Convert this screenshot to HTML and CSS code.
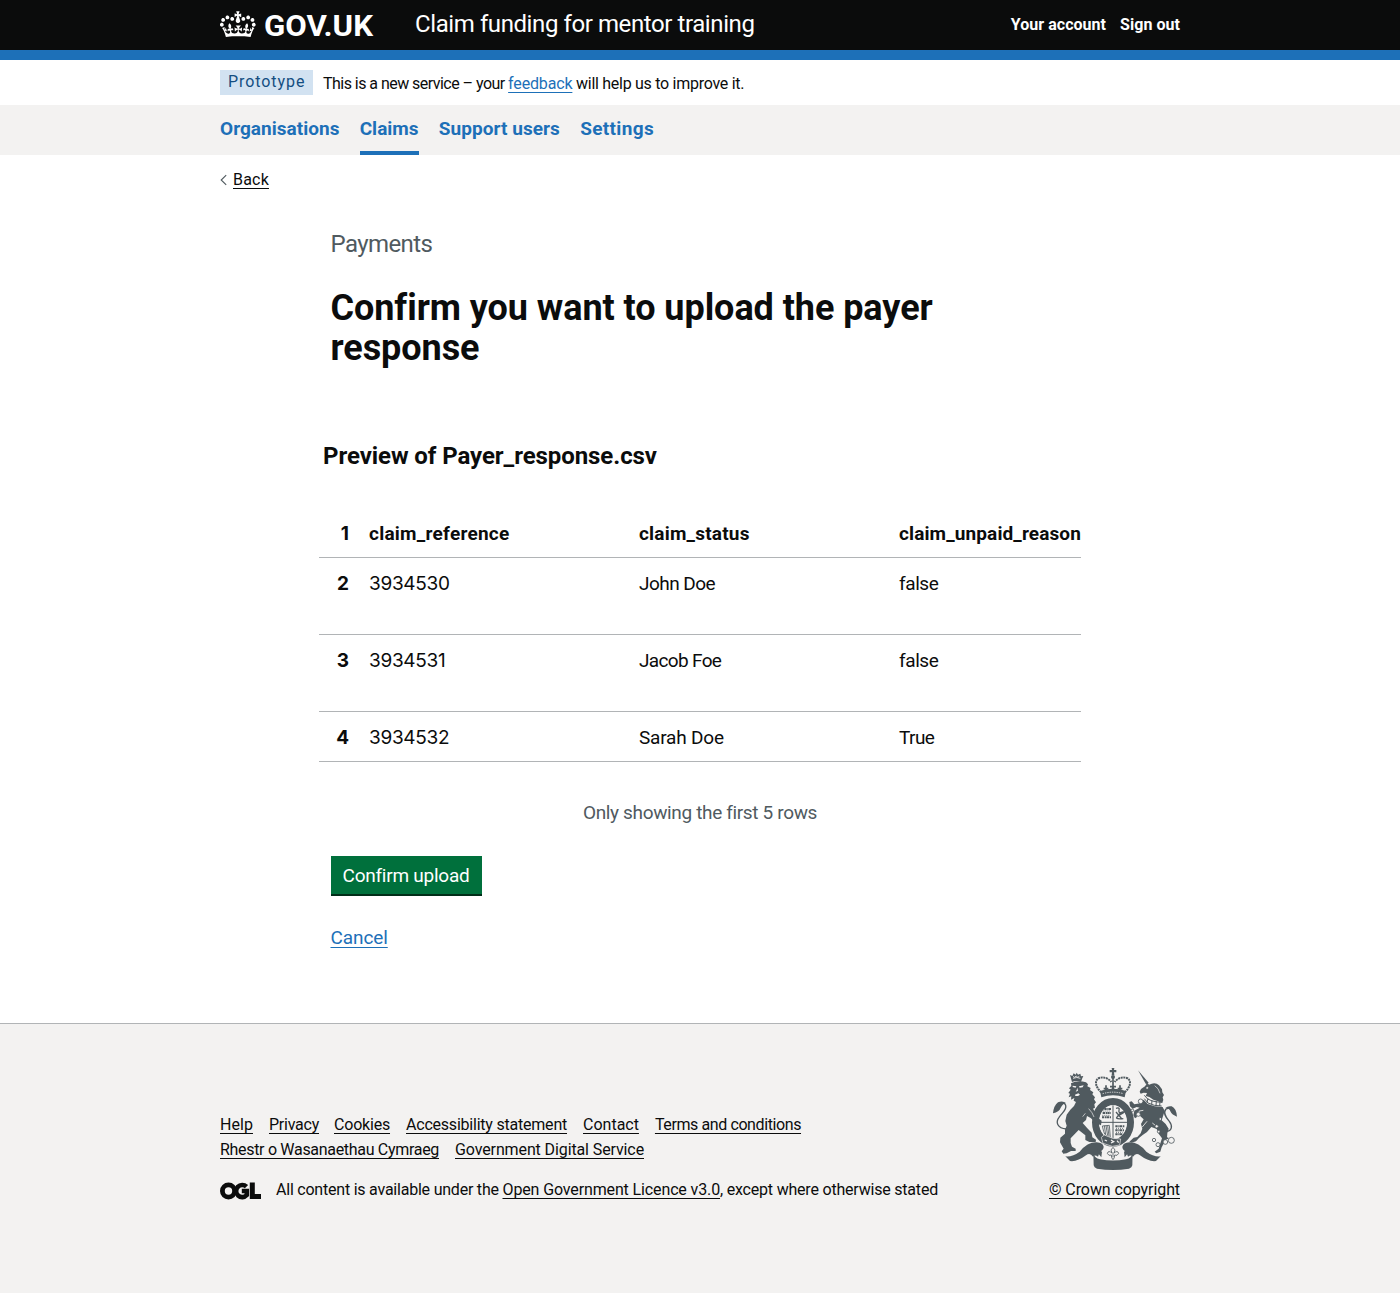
FILE: index.html
```
<!DOCTYPE html>
<html lang="en">
<head>
<meta charset="utf-8">
<title>Confirm you want to upload the payer response - Claim funding for mentor training</title>
<link rel="stylesheet" href="styles.css">
</head>
<body>
<header class="header">
  <div class="container header-inner">
    <svg class="crown" viewBox="0 4 36 27" width="36" height="27" fill="currentColor" aria-hidden="true"><path d="M6.7 12.2c1 .4 2.1-.1 2.5-1s-.1-2.1-1-2.5c-1-.4-2.1.1-2.5 1-.4 1-.1 2.1 1 2.5m-4.3 2.5c1 .4 2.1-.1 2.5-1s-.1-2.1-1-2.5c-1-.4-2.1.1-2.5 1-.5 1 0 2.1 1 2.5m-1.3 4.8c1 .4 2.1-.1 2.5-1 .4-1-.1-2.1-1-2.5-1-.4-2.1.1-2.5 1-.4 1 0 2.1 1 2.5m10.4-5.8c1 .4 2.1-.1 2.5-1s-.1-2.1-1-2.5c-1-.4-2.1.1-2.5 1s0 2.1 1 2.5m17.4-1.5c-1 .4-2.1-.1-2.5-1s.1-2.1 1-2.5c1-.4 2.1.1 2.5 1 .5 1 0 2.1-1 2.5m4.3 2.5c-1 .4-2.1-.1-2.5-1s.1-2.1 1-2.5c1-.4 2.1.1 2.5 1 .5 1 0 2.1-1 2.5m1.3 4.8c-1 .4-2.1-.1-2.5-1-.4-1 .1-2.1 1-2.5 1-.4 2.1.1 2.5 1s0 2.1-1 2.5m-10.4-5.8c-1 .4-2.1-.1-2.5-1s.1-2.1 1-2.5c1-.4 2.1.1 2.5 1s0 2.1-1 2.5m-5.3-4.8 2.4 1.3V6.5l-2.4.8c-.1-.1-.1-.1-.2-.1s1-3 1-3h-3.4l1 3c-.1.1-.2.1-.2.1-.1.1-2.4-.7-2.4-.7v3.5L17 8.8c.1.1.1.2.2.2l-1.4 4.2c-.1.2-.1.4-.1.6 0 1.1.8 2.1 1.9 2.2h.7c1.1-.2 1.9-1.1 1.9-2.1 0-.2 0-.4-.1-.6l-1.4-4.3c-.1 0 0-.1.1-.2m-1 20.3c4.6 0 8.9.3 12.8.9 1.1-4.6 2.4-7.2 3.8-9.1l-2.6-.9c.3 1.3.3 1.9 0 2.8-.4-.4-.8-1.2-1.1-2.4l-1.2 4.2c.8-.5 1.3-.9 2-.9-1.2 2.6-2.6 3.1-3.6 3-1.2-.2-1.7-1.3-1.5-2.2.3-1.3 1.6-1.6 2.2-.1 1.2-2.4-.8-3.1-2.1-2.4 1.9-1.9 2.2-3.6.6-5.7-2.2 1.7-2.2 3.3-1.2 5.6-1.3-1.5-3.3-.7-2.5 1.7.9-1.4 2.1-.5 2 .8-.2 1.2-1.7 2.1-3.7 2-2.8-.2-3-2.2-3-3.7.7-.1 1.9.5 3 2l.4-4.4c-1.1 1.2-2.2 1.4-3.3 1.4.4-1.2 2.2-3.1 2.2-3.1h-5.4s1.7 1.9 2.2 3.1c-1.1 0-2.2-.3-3.3-1.4l.4 4.4c1.1-1.5 2.2-2.1 3-2-.1 1.6-.2 3.5-3 3.7-1.9.2-3.5-.8-3.7-2-.2-1.3 1-2.2 1.9-.8.7-2.4-1.3-3.1-2.5-1.7 1-2.3.9-4-1.2-5.6-1.6 2.1-1.4 3.8.6 5.7-1.3-.8-3.3 0-2.1 2.4.6-1.4 1.9-1.1 2.2.1.2.9-.3 1.9-1.5 2.2-.9.2-2.4-.5-3.6-3 .7 0 1.3.3 2 .9l-1.2-4.2c-.3 1.2-.7 1.9-1.1 2.4-.3-.8-.2-1.4 0-2.8l-2.6.9c1.4 1.9 2.7 4.5 3.8 9.1 3.9-.6 8.2-.9 12.7-.9z"/></svg>
    <svg class="wordmark" width="112" height="38" fill="currentColor"><text x="0" y="28" textLength="109" lengthAdjust="spacingAndGlyphs">GOV.UK</text></svg>
    <span class="service-name">Claim funding for mentor training</span>
    <nav class="account"><a class="account-link">Your account</a><a class="signout-link">Sign out</a></nav>
  </div>
</header>
<div class="container phase">
  <strong class="tag">Prototype</strong>
  <p class="phase-text"><span class="phase-start">This is a new service – your </span><a class="link feedback">feedback</a><span class="phase-end"> will help us to improve it.</span></p>
</div>
<div class="nav-bar">
  <nav class="container nav">
    <a class="nav-item nav-orgs">Organisations</a>
    <a class="nav-item nav-current">Claims</a>
    <a class="nav-item nav-users">Support users</a>
    <a class="nav-item nav-settings">Settings</a>
  </nav>
</div>
<div class="container back">
  <svg width="8" height="12" viewBox="0 0 8 12" fill="none" stroke="#505a5f" stroke-width="1.1"><path d="M6.2 1.2 1.2 6l5 4.8"/></svg>
  <a class="plain-link back-link">Back</a>
</div>
<main class="container main">
  <div class="intro">
    <span class="caption">Payments</span>
    <h1>Confirm you want to upload the payer response</h1>
  </div>
  <h2>Preview of Payer_response.csv</h2>
  <table>
    <thead>
      <tr><th class="num">1</th><th class="col-ref">claim_reference</th><th class="col-status">claim_status</th><th class="col-reason">claim_unpaid_reason</th></tr>
    </thead>
    <tbody>
      <tr class="tall"><th class="num">2</th><td class="ref">3934530</td><td class="john">John Doe</td><td class="bool">false</td></tr>
      <tr class="tall"><th class="num">3</th><td class="ref">3934531</td><td class="jacob">Jacob Foe</td><td class="bool">false</td></tr>
      <tr><th class="num">4</th><td class="ref">3934532</td><td class="sarah">Sarah Doe</td><td class="bool-true">True</td></tr>
    </tbody>
  </table>
  <p class="note">Only showing the first 5 rows</p>
  <div class="actions">
    <button class="button">Confirm upload</button>
    <a class="link cancel">Cancel</a>
  </div>
</main>
<footer class="footer">
  <div class="container footer-inner">
    <div class="footer-meta">
      <div class="footer-links">
        <a class="plain-link f-help">Help</a><a class="plain-link f-privacy">Privacy</a><a class="plain-link f-cookies">Cookies</a><a class="plain-link f-access">Accessibility statement</a><a class="plain-link f-contact">Contact</a><a class="plain-link f-terms">Terms and conditions</a>
      </div>
      <div class="footer-links">
        <a class="plain-link f-cymraeg">Rhestr o Wasanaethau Cymraeg</a><a class="plain-link f-gds">Government Digital Service</a>
      </div>
      <div class="licence">
        <svg class="ogl" width="42" height="18" viewBox="0 0 42 18" fill="none" stroke="#0b0c0c" aria-label="OGL"><circle cx="8.5" cy="9" r="6.1" stroke-width="4.8"/><path d="M26.5 4.7a6.1 6.1 0 1 0 .3 8.4V9h-5" stroke-width="4.6"/><path d="M32.3.5v14h8.7" stroke-width="5"/></svg>
        <p><span class="lic-start">All content is available under the </span><a class="plain-link lic-link">Open Government Licence v3.0</a><span class="lic-end">, except where otherwise stated</span></p>
      </div>
    </div>
    <div class="copyright">
      <svg class="crest" viewBox="39 24 372 306" width="124" height="102" fill="#505a5f" stroke="none" aria-hidden="true">
        <!-- royal crown -->
        <path d="M215 24h8l-1 6h7v7h-7l1 8h-8l1-8h-7v-7h7z"/>
        <circle cx="219" cy="51" r="6"/>
        <g fill="none" stroke="#505a5f">
          <path d="M184 97C166 82 162 60 178 54C192 49 206 56 214 66M254 97C272 82 276 60 260 54C246 49 232 56 224 66" stroke-width="6" stroke-dasharray="6 2"/>
          <path d="M219 54v32M198 76v16M240 76v16M191 86h14M233 86h14M210 80h18" stroke-width="5"/>
        </g>
        <path d="M180 93Q219 80 258 93L254 112Q219 100 184 112ZM210 94l9-15 9 15z"/>
        <path d="M188 101q31-9 62 0" fill="none" stroke="#f3f2f1" stroke-width="2.5" stroke-dasharray="4 3"/>
        <!-- garter and shield -->
        <ellipse cx="219" cy="187" rx="52" ry="62" fill="none" stroke="#505a5f" stroke-width="22"/>
        <ellipse cx="219" cy="187" rx="42" ry="51" fill="#f3f2f1"/>
        <g fill="none" stroke="#505a5f">
          <path d="M219 136v104M176 187h86" stroke-width="3"/>
          <path d="M193 147h20M188 159h25M186 172h27M226 199h27M226 211h26M226 223h21" stroke-width="6" stroke-dasharray="7 2 4 1"/>
          <path d="M190 153h20M187 166h24M228 205h24M228 217h20" stroke-width="2.5" stroke-dasharray="3 3"/>
          <path d="M228 145q12-4 9 6t11 5-9 9 11 11M230 174q8-16 17-17M228 156l17 20" stroke-width="4"/>
          <path d="M187 198q4 20 8 26l16 9-3-37zM193 197l4 27M198 197l5 30M203 197l4 32" stroke-width="2.5"/>
        </g>
        <!-- lion -->
        <path d="M96 66L92 52L90 45L97 48L101 40L107 44L110 38L114 44L121 41L123 49L130 48L126 57L123 66Q110 60 96 66Z"/>
        <path d="M99 55q12-5 22 0M99 49l4 3 6-4 4 4 5-3" fill="none" stroke="#f3f2f1" stroke-width="2.5"/>
        <path d="M93 70Q113 60 138 67L144 73L142 79L152 84L150 90L160 97L157 103L165 112L162 118L168 127L163 133L165 143L159 146L171 164L174 174L185 182L183 196L174 192L172 203L165 196L166 187L152 174L141 168L138 180L128 189L142 205L155 218L157 232L168 239L167 246L148 246L136 240L136 226L116 210L105 221L92 235L92 249L96 260L107 266L107 273L93 273L80 280L70 281L65 274L71 266L60 247L61 233L75 221L75 209L80 197L76 183L80 164L91 149L102 138L108 126L101 122L103 114L93 119L94 109L86 112L90 101L85 99L92 89L87 85L94 78Z"/>
        <path d="M98 77L109 79L107 83L98 81ZM117 79L131 76L128 82L119 83ZM112 83L114 92L107 95L110 90ZM105 104L115 100L120 104L114 108L106 108Z" fill="#f3f2f1"/>
        <path d="M146 146q12 12 16 25M128 170l8-10" fill="none" stroke="#f3f2f1" stroke-width="2"/>
        <path d="M79 207C52 205 46 187 57 172C68 156 81 150 77 136C72 122 58 130 52 146" fill="none" stroke="#505a5f" stroke-width="4"/>
        <path d="M39 160Q41 137 54 127Q68 121 78 129Q68 131 63 142Q57 157 39 160Z"/>
        <!-- unicorn -->
        <path d="M294 31L326 68L318 73Z"/>
        <path d="M315 79L322 68L327 74Q346 64 357 76L366 88L367 97L372 105L368 112L370 120L366 129L354 124L340 119L328 111L317 108L321 99L311 98L302 101L299 95L303 87Z"/>
        <path d="M318 84l6-3-1 5z" fill="#f3f2f1" stroke="#f3f2f1"/>
        <path d="M344 77q12 7 16 23" fill="none" stroke="#f3f2f1" stroke-width="2"/>
        <path d="M313 106L323 117L337 123L353 126L368 126M313 116L324 129L343 136L365 138M324 115l-3 13M336 120l-1 13M349 123l-1 14M360 125l-1 13" fill="none" stroke="#505a5f" stroke-width="3"/>
        <path d="M311 119L323 132L344 139L368 141L374 153L369 169L365 181L377 192L386 206L382 220L381 234L372 249L365 262L361 275L349 280L344 275L356 266L361 250L366 235L356 221L350 207L334 201L321 216L308 225L297 234L288 244L275 248L268 245L281 233L292 231L302 220L307 206L303 192L311 178L301 169L298 153L289 161L291 171L285 175L280 166L283 152L299 143L290 141L278 146L270 139L268 126L275 124L283 133L301 130Z"/>
        <path d="M306 202L321 184M337 189L347 197M298 153l12-2" fill="none" stroke="#f3f2f1" stroke-width="2.5"/>
        <path d="M378 214C397 213 398 197 388 184C375 169 369 158 378 147C389 141 397 149 400 157" fill="none" stroke="#505a5f" stroke-width="4"/>
        <path d="M411 170Q409 145 395 139Q384 137 376 143Q389 144 391 154Q396 165 411 170Z"/>
        <path d="M375 237l10-3" fill="none" stroke="#505a5f" stroke-width="4"/>
        <g fill="#f3f2f1" stroke="#505a5f" stroke-width="2.5"><circle cx="302" cy="124" r="7"/><circle cx="277" cy="151" r="4"/><circle cx="295" cy="163" r="6"/><circle cx="342" cy="240" r="5"/><circle cx="354" cy="254" r="6"/><circle cx="376" cy="246" r="7"/><circle cx="394" cy="241" r="9"/><circle cx="361" cy="177" r="4"/><circle cx="350" cy="199" r="5"/><circle cx="356" cy="215" r="4"/></g>
        <!-- garter buckle -->
        <path d="M184 232l9-7 25 10 24 2-3 18-22 4-28-9z" stroke="#f3f2f1" stroke-width="2"/>
        <path d="M194 240l7 3M213 240l8 5-8 4M231 242l5 6" fill="none" stroke="#f3f2f1" stroke-width="4"/>
        <!-- motto ribbon -->
        <path d="M76 289Q98 291 119 275Q143 246 170 247Q188 248 191 260Q191 270 180 274L174 290Q165 283 159 290Q150 276 138 286Q112 306 90 303Z"/>
        <path d="M362 289Q340 291 319 275Q295 246 268 247Q250 248 247 260Q247 270 258 274L264 290Q273 283 279 290Q288 276 300 286Q326 306 348 303Z"/>
        <path d="M159 276Q163 296 180 298Q219 305 258 298Q275 296 279 276Q277 292 277 316Q276 323 267 326Q219 334 171 326Q162 323 161 316Q161 292 159 276Z"/>
        <path d="M172 266L186 275L184 292L176 282ZM266 266L252 275L254 292L262 282Z"/>
        <path d="M219 262l6 8-3 9q11-9 14 1l-5 6-7-1-1 8-4 6-4-6-1-8-7 1-5-6q3-10 14-1l-3-9zM219 278v14" fill="#f3f2f1" stroke="#505a5f" stroke-width="2.5"/>
      </svg>
      <a class="plain-link f-crown">© Crown copyright</a>
    </div>
  </div>
</footer>
</body>
</html>
```
FILE: styles.css
```
* { box-sizing: border-box; }
body { margin: 0; background: #fff; color: #0b0c0c; font-family: Roboto, "Liberation Sans", sans-serif; font-size: 19px; line-height: 25px; }
h1, h2, p { margin: 0; }
a, span { white-space: pre; }
.container { width: 960px; margin: 0 auto; }

.header { height: 60px; background: #0b0c0c; border-bottom: 10px solid #1d70b8; color: #fff; }
.header-inner { display: flex; height: 50px; align-items: flex-start; }
.crown { margin-top: 11px; }
.wordmark { margin: 8px 0 0 7.5px; font-size: 30px; font-weight: 700; }
.service-name { margin: 9px 0 0 39.5px; font-size: 24px; line-height: 30px; letter-spacing: -0.41px; }
.account { display: flex; gap: 14px; margin: 12px 0 0 auto; font-size: 16px; font-weight: 700; }
.account-link { letter-spacing: 0.03px; }
.signout-link { letter-spacing: 0.05px; }

.phase { display: flex; gap: 10px; height: 45px; padding-top: 10px; font-size: 16px; }
.tag { width: 93px; height: 25px; padding-left: 8px; background: #d2e2f1; color: #144e81; font-weight: 400; letter-spacing: 0.93px; line-height: 24px; }
.phase-text { line-height: 27px; }
.phase-start { letter-spacing: -0.535px; }
.feedback { letter-spacing: -0.16px; }
.phase-end { letter-spacing: -0.28px; }

.link { color: #1d70b8; text-decoration: underline; text-decoration-thickness: 1px; text-underline-offset: 3px; }
.plain-link { text-decoration: underline; text-decoration-thickness: 1px; text-underline-offset: 3px; }

.nav-bar { height: 50px; background: #f3f2f1; }
.nav { display: flex; gap: 20.2px; height: 50px; }
.nav-item { height: 50px; padding-top: 11px; color: #1d70b8; font-weight: 700; }
.nav-orgs { letter-spacing: 0.03px; }
.nav-current { border-bottom: 4px solid #1d70b8; }
.nav-users { letter-spacing: 0.06px; }
.nav-settings { letter-spacing: 0.35px; }

.back { display: flex; align-items: center; gap: 5px; height: 50px; font-size: 16px; }
.back-link { margin-top: -2px; letter-spacing: 0.2px; }

.main { height: 818px; padding: 24px 99px 0; }
.intro { width: 650px; padding-left: 11.5px; }
.caption { display: block; color: #505a5f; font-size: 24px; line-height: 30px; letter-spacing: -0.6px; }
h1 { margin-top: 29px; font-size: 36px; line-height: 40px; letter-spacing: -0.06px; }
h2 { margin: 73px 0 36px 4px; font-size: 24px; line-height: 30px; letter-spacing: -0.07px; }
table { width: 762px; border-collapse: collapse; table-layout: fixed; }
tr { height: 50px; border-bottom: 1px solid #b1b4b6; }
.tall { height: 77px; }
th, td { padding: 13px 0 0; text-align: left; vertical-align: top; white-space: nowrap; }
thead th { padding-top: 14px; }
.num { width: 50px; padding-right: 20px; text-align: right; font-family: Inter, Roboto, sans-serif; }
.col-ref { width: 270px; letter-spacing: 0.25px; }
.col-status { width: 260px; letter-spacing: 0.2px; }
.col-reason { letter-spacing: 0.12px; }
.ref { font-family: Inter, Roboto, sans-serif; letter-spacing: -0.3px; }
.john { letter-spacing: -0.55px; }
.jacob { letter-spacing: -0.66px; }
.sarah { letter-spacing: -0.2px; }
.bool { letter-spacing: -0.4px; }
.bool-true { letter-spacing: -0.6px; }
.note { margin-top: 38px; text-align: center; color: #505a5f; letter-spacing: -0.35px; }
.actions { display: flex; flex-direction: column; align-items: flex-start; gap: 29px; margin-top: 31px; padding-left: 11.5px; }
.button { width: 151px; height: 40px; padding: 2px 0 0; border: 0; border-bottom: 2px solid #002d18; background: #00703c; color: #fff; font-family: inherit; font-size: 19px; letter-spacing: -0.25px; }
.cancel { letter-spacing: -0.1px; }

.footer { height: 270px; background: #f3f2f1; border-top: 1px solid #b1b4b6; font-size: 16px; }
.footer-inner { display: flex; justify-content: space-between; padding-top: 44px; }
.footer-meta { padding-top: 44px; }
.footer-links { display: flex; gap: 16px; height: 25px; }
.licence { display: flex; gap: 14px; margin-top: 15px; }
.ogl { margin-top: 5px; }
.f-help { letter-spacing: 0.05px; }
.f-privacy { letter-spacing: -0.24px; }
.f-cookies { margin-left: -1px; letter-spacing: -0.2px; }
.f-access { letter-spacing: -0.218px; }
.f-terms { letter-spacing: -0.4px; }
.f-cymraeg { letter-spacing: -0.307px; }
.f-gds { letter-spacing: -0.114px; }
.lic-start { letter-spacing: -0.22px; }
.lic-link { letter-spacing: -0.129px; }
.lic-end { letter-spacing: -0.202px; }
.copyright { display: flex; flex-direction: column; width: 131px; }
.crest { margin-left: 4px; }
.f-crown { margin-top: 7px; letter-spacing: -0.087px; }
```
